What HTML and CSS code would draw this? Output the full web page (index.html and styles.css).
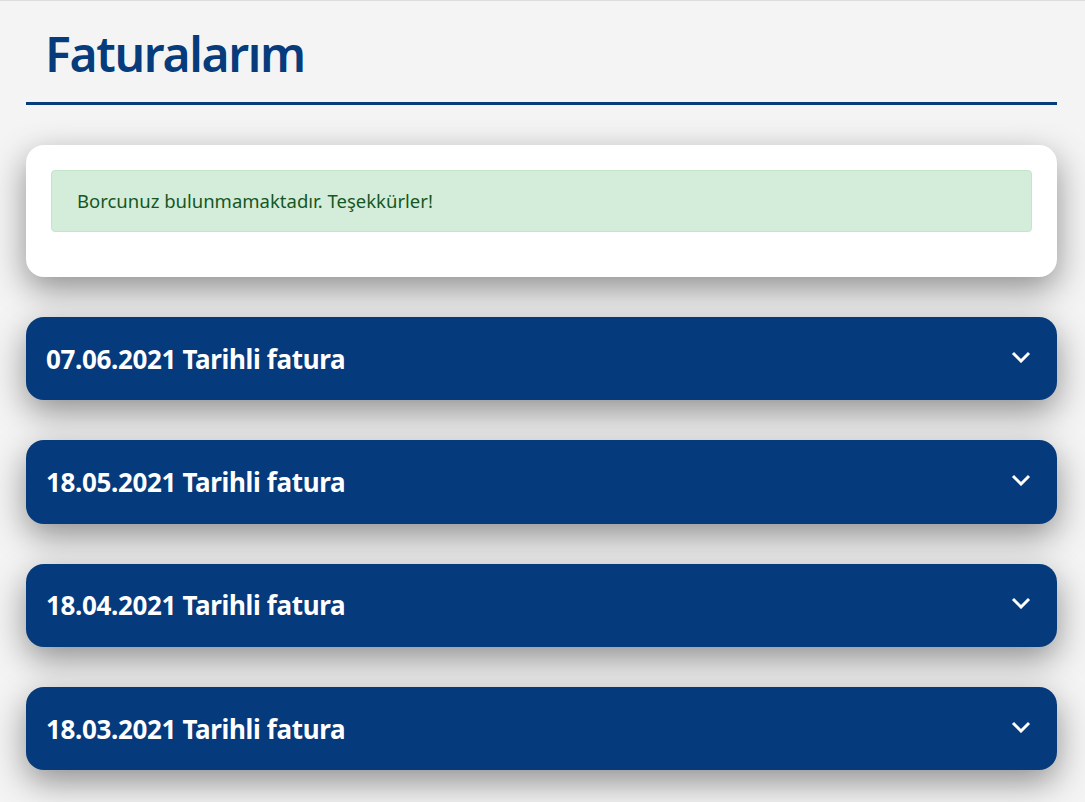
FILE: index.html
```html
<!DOCTYPE html>
<html lang="tr">
<head>
  <meta charset="UTF-8" />
  <meta name="viewport" content="width=device-width, initial-scale=1.0" />
  <title>Faturalarım</title>
  <link rel="stylesheet" href="styles.css">
</head>
<body>

  <div class="page">
    <h1 class="title">Faturalarım</h1>

    <div class="card">
      <div class="alert">Borcunuz bulunmamaktadır. Teşekkürler!</div>
    </div>

    <div class="invoice">
      <span>07.06.2021 Tarihli fatura</span>
      <svg class="chevron" viewBox="0 0 20 12"><path d="M2 2l8 8 8-8" /></svg>
    </div>
    <div class="invoice">
      <span>18.05.2021 Tarihli fatura</span>
      <svg class="chevron" viewBox="0 0 20 12"><path d="M2 2l8 8 8-8" /></svg>
    </div>
    <div class="invoice">
      <span>18.04.2021 Tarihli fatura</span>
      <svg class="chevron" viewBox="0 0 20 12"><path d="M2 2l8 8 8-8" /></svg>
    </div>
    <div class="invoice">
      <span>18.03.2021 Tarihli fatura</span>
      <svg class="chevron" viewBox="0 0 20 12"><path d="M2 2l8 8 8-8" /></svg>
    </div>
  </div>

</body>
</html>
```

FILE: styles.css
```css
body {
  margin: 0;
  font-family: 'Noto Sans', 'Open Sans', sans-serif;
  background: #f4f4f4;
  border-top: 1px solid #dcdcdc;
}

.page {
  padding: 0 28px 40px 26px;
}

.title {
  margin: 0;
  padding: 21px 0 16px 19px;
  font-size: 48px;
  font-weight: 600;
  letter-spacing: -1.3px;
  line-height: 64px;
  color: #063b7c;
  border-bottom: 3px solid #063b7c;
}

.card {
  margin-top: 40px;
  background: #ffffff;
  border-radius: 18px;
  padding: 25px 25px 45px 25px;
  box-shadow: 0 12px 34px rgba(0, 0, 0, 0.42);
}

.alert {
  background: #d4edda;
  border: 1px solid #c3e6cb;
  border-radius: 4px;
  color: #155724;
  font-size: 18.5px;
  line-height: 24px;
  padding: 18px 25px;
}

.invoice {
  margin-top: 40px;
  height: 83.33px;
  display: flex;
  align-items: center;
  justify-content: space-between;
  padding: 0 26px 0 20px;
  background: #053a7c;
  color: #ffffff;
  border-radius: 18px;
  font-size: 26px;
  font-weight: 700;
  letter-spacing: -0.35px;
  box-shadow: 0 12px 34px rgba(0, 0, 0, 0.42);
}

.chevron {
  width: 20px;
  height: 12px;
  fill: none;
  stroke: #ffffff;
  stroke-width: 3;
  margin-top: -4px;
}
```
